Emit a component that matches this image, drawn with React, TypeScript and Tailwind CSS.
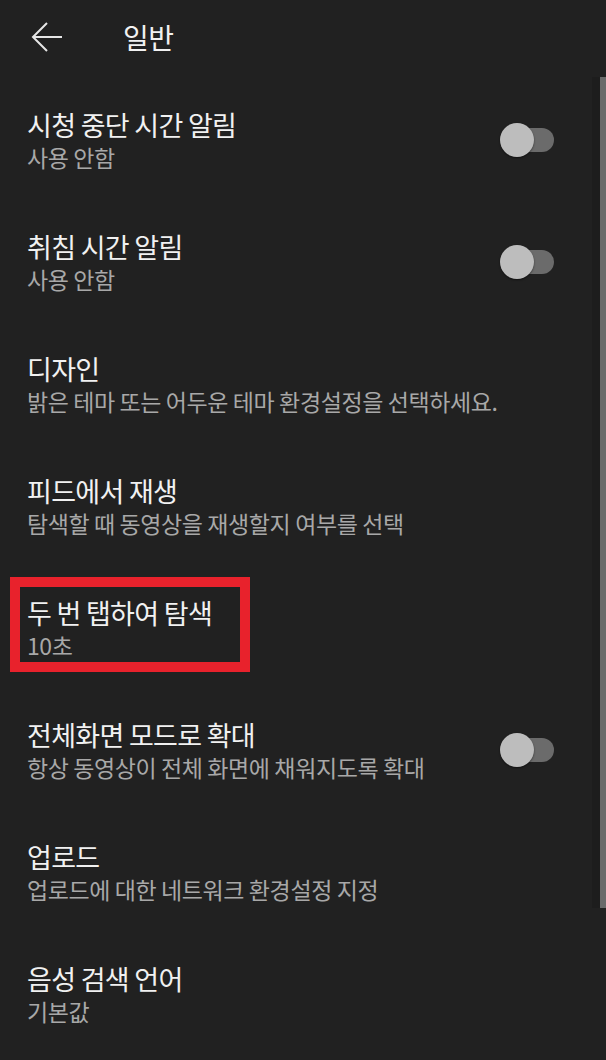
import React from 'react';

type Row = { title: string; sub: string; toggle?: boolean; marked?: boolean };

const rows: Row[] = [
  { title: '시청 중단 시간 알림', sub: '사용 안함', toggle: true },
  { title: '취침 시간 알림', sub: '사용 안함', toggle: true },
  { title: '디자인', sub: '밝은 테마 또는 어두운 테마 환경설정을 선택하세요.' },
  { title: '피드에서 재생', sub: '탐색할 때 동영상을 재생할지 여부를 선택' },
  { title: '두 번 탭하여 탐색', sub: '10초', marked: true },
  { title: '전체화면 모드로 확대', sub: '항상 동영상이 전체 화면에 채워지도록 확대', toggle: true },
  { title: '업로드', sub: '업로드에 대한 네트워크 환경설정 지정' },
  { title: '음성 검색 언어', sub: '기본값' },
];

const Toggle = () => (
  <div className="relative w-[54px] h-[34px] flex items-center">
    <div className="absolute right-0 w-[44px] h-[24px] rounded-full bg-[#6b6b6b]" />
    <div className="absolute left-0 w-[34px] h-[34px] rounded-full bg-[#bdbdbd] shadow-[0_1px_2px_rgba(0,0,0,0.5)]" />
  </div>
);

export default function App() {
  return (
    <div
      className="relative w-[606px] h-[1060px] overflow-hidden bg-[#212121]"
      style={{ fontFamily: '"Noto Sans CJK KR", "Noto Sans", sans-serif' }}
    >
      {/* header */}
      <div className="h-[79px] flex items-center pl-[31px]">
        <svg width="32" height="32" viewBox="0 0 32 32" className="text-[#e6e6e6] -mt-[6px]">
          <path d="M31 16H2.5M16 2L2 16 16 30" fill="none" stroke="currentColor" strokeWidth="2" />
        </svg>
        <span className="ml-[60px] -mt-[6px] text-[28px] leading-[36px] text-[#f1f1f1] tracking-[-0.5px]">일반</span>
      </div>

      {/* list */}
      <div className="flex flex-col">
        {rows.map((r, i) => (
          <div key={i} className="relative h-[122px] flex items-center pl-[27px] pr-[52px]">
            <div className="flex-1 flex flex-col">
              <div className="text-[27px] leading-[34px] text-[#f1f1f1] tracking-[-0.7px]">{r.title}</div>
              <div className="text-[23px] leading-[30px] text-[#a8a8a8] tracking-[-0.4px]">{r.sub}</div>
            </div>
            {r.toggle && <Toggle />}
            {r.marked && (
              <div className="absolute left-[10px] top-[10px] w-[240px] h-[95px] border-[10px] border-[#e8222c]" />
            )}
          </div>
        ))}
      </div>

      {/* scrollbar */}
      <div className="absolute right-0 top-[77px] w-[6px] h-[831px] bg-[#6a6a6a]" />
      <div className="absolute right-[6px] top-[77px] w-[8px] h-[831px] bg-[#1d1d1d]" />
    </div>
  );
}
